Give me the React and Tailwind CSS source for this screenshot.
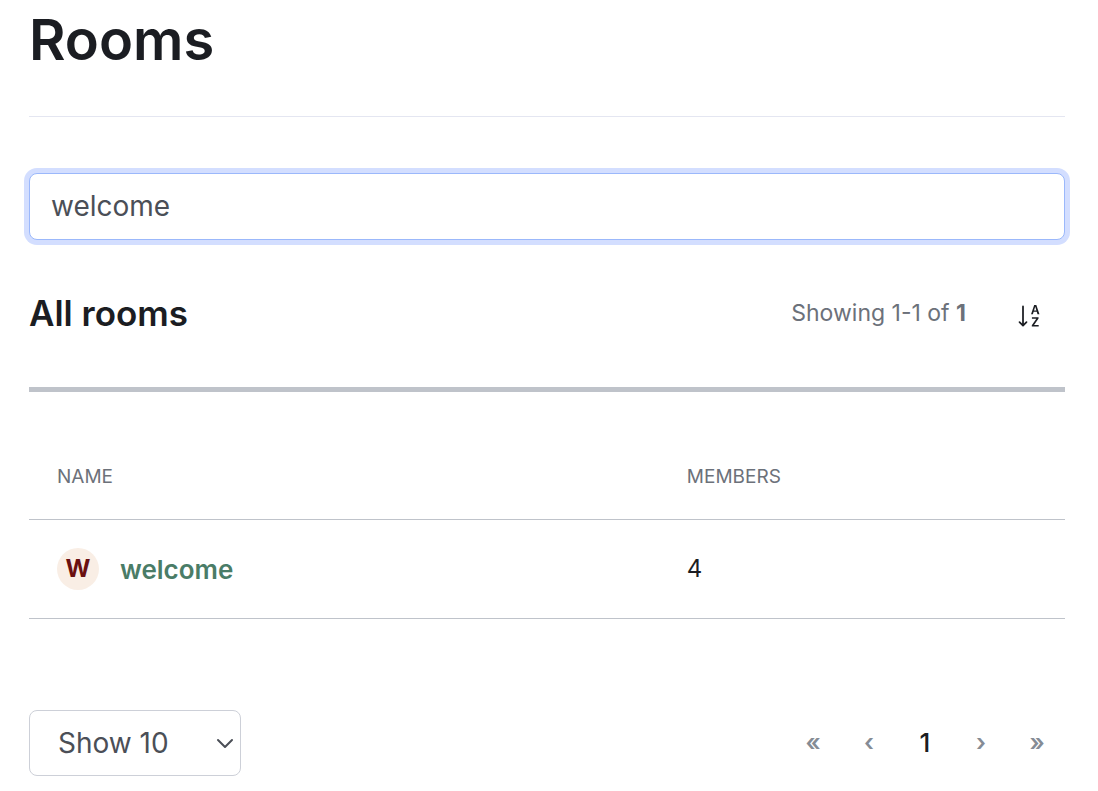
import { useState } from "react";
import { BsSortAlphaDown } from "react-icons/bs";

const rooms = [{ name: "welcome", members: 4 }];

export default function App() {
  const [search, setSearch] = useState("welcome");
  const [pageSize, setPageSize] = useState("10");

  const filtered = rooms.filter((room) => room.name.includes(search));

  return (
    <main className="bg-white pt-2 pr-[33px] pb-4 pl-[29px] font-['Inter',sans-serif] text-[#1b1d22]">
      <h1 className="text-[56px] leading-16 font-semibold">Rooms</h1>
      <hr className="mt-11 border-[#e4e6f1]" />

      <input
        type="text"
        aria-label="Search rooms"
        value={search}
        onChange={(e) => setSearch(e.target.value)}
        className="mt-14 block h-[67px] w-full rounded-lg border border-[#9bb8fb] bg-white px-[21px] pb-0.5 text-[28px] text-[#4b4f57] ring-5 ring-[#d3deff] outline-none"
      />

      {/* List heading */}
      <div className="mt-12 flex items-center justify-between pr-[21px]">
        <h2 className="text-[35px] leading-[50px] font-semibold">All rooms</h2>
        <div className="flex items-center gap-[50px]">
          <p className="text-[23px] text-[#6c717a]">
            Showing 1-1 of <b className="font-bold">1</b>
          </p>
          <button type="button" aria-label="Sort by name" className="pt-1.5">
            <BsSortAlphaDown className="size-7" />
          </button>
        </div>
      </div>

      <table className="mt-[49px] w-full table-fixed border-t-5 border-[#bfc3ca] text-left">
        <thead>
          <tr className="border-b border-[#bfc3ca] text-[19px] leading-7 text-[#6c717a]">
            <th className="w-[63.5%] pt-[71px] pb-7 pl-7 font-normal">NAME</th>
            <th className="pt-[71px] pb-7 font-normal">MEMBERS</th>
          </tr>
        </thead>
        <tbody>
          {filtered.map((room) => (
            <tr key={room.name} className="h-[99px] border-b border-[#bfc3ca]">
              <td className="pl-7">
                <div className="flex items-center gap-[21px]">
                  <span className="flex size-[42px] items-center justify-center rounded-full bg-[#f9eee5] text-2xl font-bold text-[#6a1010]">
                    W
                  </span>
                  <a href="#welcome" className="text-[26px] font-semibold text-[#4a7c67]">
                    {room.name}
                  </a>
                </div>
              </td>
              <td className="text-2xl">{room.members}</td>
            </tr>
          ))}
        </tbody>
      </table>

      {/* Page size and pagination */}
      <div className="mt-[91px] flex items-center justify-between">
        <div className="relative">
          <select
            aria-label="Rooms per page"
            value={pageSize}
            onChange={(e) => setPageSize(e.target.value)}
            className="h-[66px] w-[212px] appearance-none rounded-lg border border-[#cdd0d8] bg-white pl-7 text-[28px] text-[#4b4f57]"
          >
            <option value="10">Show 10</option>
            <option value="25">Show 25</option>
            <option value="50">Show 50</option>
          </select>
          <svg
            className="pointer-events-none absolute top-6 right-1.5 size-5"
            viewBox="0 0 20 20"
            fill="none"
            stroke="#4b4f57"
            strokeWidth="2"
            strokeLinecap="round"
            strokeLinejoin="round"
          >
            <path d="M3 6l7 7 7-7" />
          </svg>
        </div>
        <nav aria-label="Pagination" className="flex text-2xl font-semibold text-[#858c95]">
          <button type="button" className="w-14">«</button>
          <button type="button" className="w-14">‹</button>
          <button type="button" className="w-14 text-[26px] font-medium text-[#1b1d22]">1</button>
          <button type="button" className="w-14">›</button>
          <button type="button" className="w-14">»</button>
        </nav>
      </div>
    </main>
  );
}
